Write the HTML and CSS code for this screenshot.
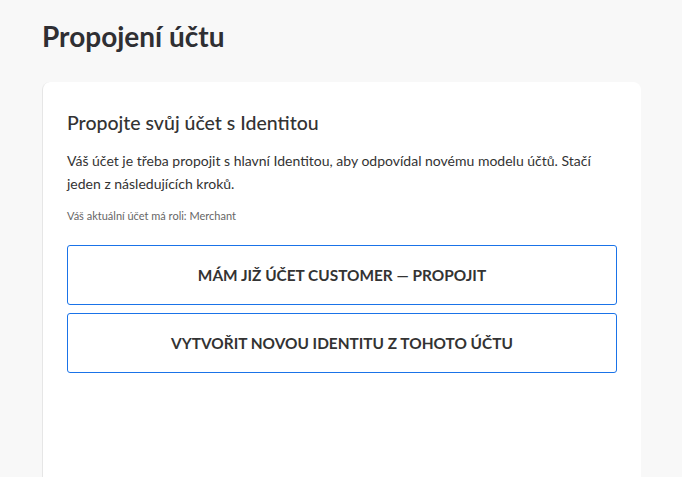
FILE: index.html
```html
<!DOCTYPE html>
<html lang="cs">
<head>
  <meta charset="UTF-8" />
  <meta name="viewport" content="width=device-width, initial-scale=1.0"/>
  <title>Propojení účtu</title>
  <link rel="stylesheet" href="styles.css">
</head>
<body>

  <main class="page">
    <h1 class="page-title">Propojení účtu</h1>

    <section class="card">
      <h2 class="card-title">Propojte svůj účet s Identitou</h2>
      <p class="card-text">Váš účet je třeba propojit s hlavní Identitou, aby odpovídal novému modelu účtů. Stačí jeden z následujících kroků.</p>
      <p class="card-note">Váš aktuální účet má roli: Merchant</p>

      <div class="actions">
        <button class="action">Mám již účet Customer — propojit</button>
        <button class="action">Vytvořit novou identitu z tohoto účtu</button>
      </div>
    </section>
  </main>

</body>
</html>
```

FILE: styles.css
```css
:root {
  --bg: #f8f8f8;
  --white: #fff;
  --text: #333;
  --muted: #666;
  --blue: #1a73e8;
}

* {
  box-sizing: border-box;
}

body {
  margin: 0;
  background: var(--bg);
  font-family: 'Lato', 'Noto Sans', sans-serif;
  color: var(--text);
}

.page {
  padding: 20px 41px 0 42px;
}

.page-title {
  margin: 0 0 30px;
  font-size: 28px;
  font-weight: 700;
  line-height: 32px;
  color: #2f2f33;
}

.card {
  background: var(--white);
  border-radius: 8px;
  border-left: 1px solid #e6e6e6;
  padding: 27px 24px 160px 24px;
}

.card-title {
  margin: 0 0 12px;
  font-size: 19.5px;
  font-weight: 500;
  line-height: 28px;
}

.card-text {
  margin: 0 0 13px;
  font-size: 14px;
  line-height: 23px;
}

.card-note {
  margin: 0 0 21px;
  font-size: 11px;
  line-height: 16px;
  color: var(--muted);
}

.actions {
  display: flex;
  flex-direction: column;
  gap: 8px;
}

.action {
  height: 60px;
  background: var(--white);
  border: 1px solid var(--blue);
  border-radius: 3px;
  font-family: 'Lato', sans-serif;
  font-size: 15.4px;
  font-weight: 700;
  text-transform: uppercase;
  color: #333;
  cursor: pointer;
}
```
